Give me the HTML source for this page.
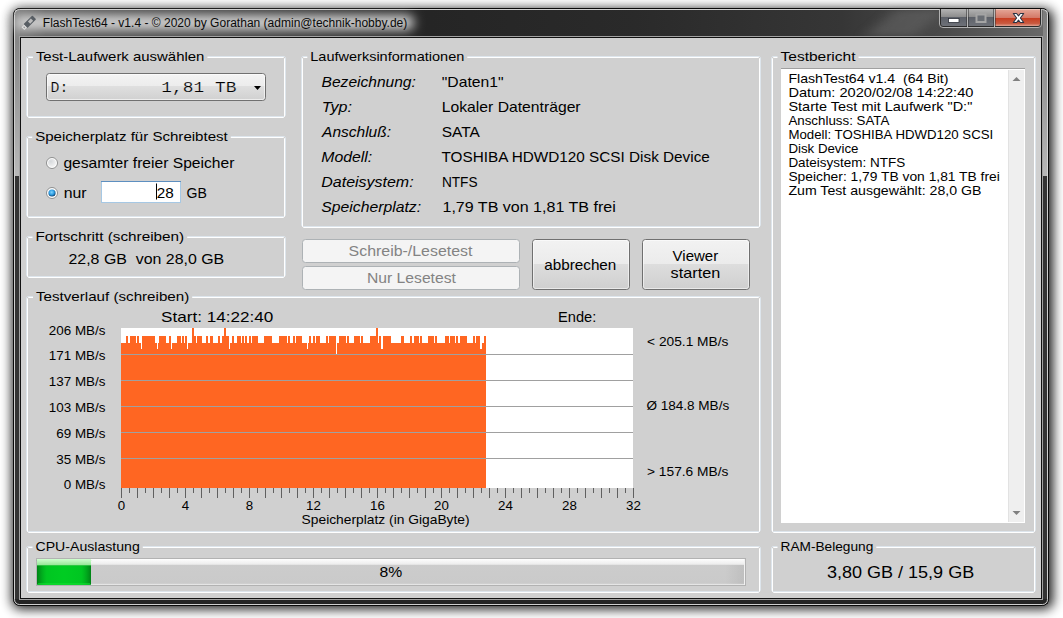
<!DOCTYPE html>
<html><head><meta charset="utf-8"><style>
html,body{margin:0;padding:0;background:#fff;width:1063px;height:618px;overflow:hidden}
svg{display:block}
</style></head><body>
<svg width="1063" height="618" viewBox="0 0 1063 618" shape-rendering="auto">
<defs>
<filter id="shadow" x="-5%" y="-8%" width="110%" height="120%"><feGaussianBlur stdDeviation="6"/></filter>
<filter id="glow" x="-20%" y="-100%" width="140%" height="300%"><feGaussianBlur stdDeviation="5.5"/></filter>
<linearGradient id="sideL" x1="0" y1="0" x2="0" y2="1"><stop offset="0" stop-color="#7c7c7c"/><stop offset="1" stop-color="#b8b8b8"/></linearGradient>
<linearGradient id="tbar" gradientUnits="userSpaceOnUse" x1="15" y1="0" x2="1048" y2="0"><stop offset="0" stop-color="#7a7a7a"/><stop offset="0.03" stop-color="#5a5a5a"/><stop offset="0.4" stop-color="#252525"/><stop offset="0.6" stop-color="#2a2a2a"/><stop offset="0.8" stop-color="#363636"/><stop offset="0.9" stop-color="#4a4a4a"/><stop offset="1" stop-color="#6a6a6a"/></linearGradient>
<linearGradient id="btnG" x1="0" y1="0" x2="0" y2="1"><stop offset="0" stop-color="#f2f2f2"/><stop offset="0.5" stop-color="#ebebeb"/><stop offset="0.5" stop-color="#dddddd"/><stop offset="1" stop-color="#cfcfcf"/></linearGradient>
<linearGradient id="cmbG" x1="0" y1="0" x2="0" y2="1"><stop offset="0" stop-color="#f4f4f4"/><stop offset="0.48" stop-color="#ececec"/><stop offset="0.48" stop-color="#dfdfdf"/><stop offset="1" stop-color="#d0d0d0"/></linearGradient>
<linearGradient id="minG" x1="0" y1="0" x2="0" y2="1"><stop offset="0" stop-color="#b9b9b9"/><stop offset="0.45" stop-color="#8c8c8c"/><stop offset="0.5" stop-color="#5d6068"/><stop offset="1" stop-color="#6a6d75"/></linearGradient>
<linearGradient id="clsG" x1="0" y1="0" x2="0" y2="1"><stop offset="0" stop-color="#e0a090"/><stop offset="0.45" stop-color="#cc6a55"/><stop offset="0.5" stop-color="#c0391d"/><stop offset="1" stop-color="#d0604a"/></linearGradient>
<linearGradient id="grnG" x1="0" y1="0" x2="0" y2="1"><stop offset="0" stop-color="#c8ffc8"/><stop offset="0.22" stop-color="#a8eaa8"/><stop offset="0.23" stop-color="#00c020"/><stop offset="1" stop-color="#00dd22"/></linearGradient>
<linearGradient id="prgG" x1="0" y1="0" x2="0" y2="1"><stop offset="0" stop-color="#ffffff"/><stop offset="0.22" stop-color="#ececec"/><stop offset="0.23" stop-color="#cccccc"/><stop offset="0.92" stop-color="#cacaca"/><stop offset="0.96" stop-color="#e8e8e8"/><stop offset="1" stop-color="#c8c8c8"/></linearGradient>
</defs>
<rect x="0" y="0" width="1063" height="618" fill="#ffffff"/>
<rect x="12" y="9" width="1041" height="600" rx="8" fill="#000" opacity="0.9" filter="url(#shadow)"/>
<rect x="13.5" y="8.5" width="1035" height="597" rx="6" fill="#343434" stroke="#0a0a0a" stroke-width="1"/><rect x="15" y="599" width="1033" height="5" fill="#242424"/>
<rect x="15" y="10" width="1033" height="26" fill="url(#tbar)"/>
<filter id="streak" x="-50%" y="-50%" width="200%" height="200%"><feGaussianBlur stdDeviation="7 3"/></filter>
<polygon points="895,10 945,10 915,36 865,36" fill="#666" opacity="0.55" filter="url(#streak)"/>
<rect x="15" y="10" width="5" height="166" fill="url(#sideL)"/>
<rect x="1043" y="10" width="5" height="166" fill="url(#sideL)"/>
<rect x="14" y="15" width="400" height="15" rx="7" fill="#d4d4d4" filter="url(#glow)"/>
<rect x="14.5" y="9.5" width="1033" height="595" rx="5" fill="none" stroke="#d8d8d8" stroke-opacity="0.95" stroke-width="1"/>
<rect x="19.5" y="36.5" width="1023" height="563" fill="none" stroke="#a2a2a2" stroke-width="1"/>
<rect x="20.5" y="37.5" width="1021" height="561" fill="none" stroke="#111" stroke-width="1"/>
<rect x="21" y="38" width="1020" height="560" fill="#d0d0d0"/>
<path d="M26.5,57.5 L27.5,56.5 L284.5,56.5 L285.5,57.5 L285.5,115.5 L284.5,116.5 L27.5,116.5 L26.5,115.5 Z" fill="none" stroke="#dde5ec" stroke-width="1"/>
<path d="M27.5,58.5 L28.5,57.5 L283.5,57.5 L284.5,58.5 L284.5,116.5 L283.5,117.5 L28.5,117.5 L27.5,116.5 Z" fill="none" stroke="#ffffff" stroke-width="1"/>
<path d="M26.5,137.5 L27.5,136.5 L284.5,136.5 L285.5,137.5 L285.5,215.5 L284.5,216.5 L27.5,216.5 L26.5,215.5 Z" fill="none" stroke="#dde5ec" stroke-width="1"/>
<path d="M27.5,138.5 L28.5,137.5 L283.5,137.5 L284.5,138.5 L284.5,216.5 L283.5,217.5 L28.5,217.5 L27.5,216.5 Z" fill="none" stroke="#ffffff" stroke-width="1"/>
<path d="M26.5,237.5 L27.5,236.5 L284.5,236.5 L285.5,237.5 L285.5,275.5 L284.5,276.5 L27.5,276.5 L26.5,275.5 Z" fill="none" stroke="#dde5ec" stroke-width="1"/>
<path d="M27.5,238.5 L28.5,237.5 L283.5,237.5 L284.5,238.5 L284.5,276.5 L283.5,277.5 L28.5,277.5 L27.5,276.5 Z" fill="none" stroke="#ffffff" stroke-width="1"/>
<path d="M26.5,297.5 L27.5,296.5 L759.5,296.5 L760.5,297.5 L760.5,530.5 L759.5,531.5 L27.5,531.5 L26.5,530.5 Z" fill="none" stroke="#dde5ec" stroke-width="1"/>
<path d="M27.5,298.5 L28.5,297.5 L758.5,297.5 L759.5,298.5 L759.5,531.5 L758.5,532.5 L28.5,532.5 L27.5,531.5 Z" fill="none" stroke="#ffffff" stroke-width="1"/>
<path d="M26.5,547.5 L27.5,546.5 L759.5,546.5 L760.5,547.5 L760.5,590.5 L759.5,591.5 L27.5,591.5 L26.5,590.5 Z" fill="none" stroke="#dde5ec" stroke-width="1"/>
<path d="M27.5,548.5 L28.5,547.5 L758.5,547.5 L759.5,548.5 L759.5,591.5 L758.5,592.5 L28.5,592.5 L27.5,591.5 Z" fill="none" stroke="#ffffff" stroke-width="1"/>
<path d="M301.5,57.5 L302.5,56.5 L759.5,56.5 L760.5,57.5 L760.5,225.5 L759.5,226.5 L302.5,226.5 L301.5,225.5 Z" fill="none" stroke="#dde5ec" stroke-width="1"/>
<path d="M302.5,58.5 L303.5,57.5 L758.5,57.5 L759.5,58.5 L759.5,226.5 L758.5,227.5 L303.5,227.5 L302.5,226.5 Z" fill="none" stroke="#ffffff" stroke-width="1"/>
<path d="M771.5,57.5 L772.5,56.5 L1034.5,56.5 L1035.5,57.5 L1035.5,530.5 L1034.5,531.5 L772.5,531.5 L771.5,530.5 Z" fill="none" stroke="#dde5ec" stroke-width="1"/>
<path d="M772.5,58.5 L773.5,57.5 L1033.5,57.5 L1034.5,58.5 L1034.5,531.5 L1033.5,532.5 L773.5,532.5 L772.5,531.5 Z" fill="none" stroke="#ffffff" stroke-width="1"/>
<path d="M771.5,547.5 L772.5,546.5 L1034.5,546.5 L1035.5,547.5 L1035.5,590.5 L1034.5,591.5 L772.5,591.5 L771.5,590.5 Z" fill="none" stroke="#dde5ec" stroke-width="1"/>
<path d="M772.5,548.5 L773.5,547.5 L1033.5,547.5 L1034.5,548.5 L1034.5,591.5 L1033.5,592.5 L773.5,592.5 L772.5,591.5 Z" fill="none" stroke="#ffffff" stroke-width="1"/>
<rect x="32.9" y="54" width="174.5" height="6" fill="#d0d0d0"/>
<rect x="307.3" y="54" width="160.0" height="6" fill="#d0d0d0"/>
<rect x="777.5" y="54" width="81.0" height="6" fill="#d0d0d0"/>
<rect x="32.2" y="134" width="198.60000000000002" height="6" fill="#d0d0d0"/>
<rect x="32.5" y="234" width="154.7" height="6" fill="#d0d0d0"/>
<rect x="33" y="294" width="159.2" height="6" fill="#d0d0d0"/>
<rect x="32.5" y="544" width="110.30000000000001" height="6" fill="#d0d0d0"/>
<rect x="777.5" y="544" width="98.79999999999995" height="6" fill="#d0d0d0"/>
<text x="35.90" y="61.00" font-size="13" font-family='"Liberation Sans",sans-serif' fill="#000" textLength="168.50" lengthAdjust="spacingAndGlyphs" style="white-space:pre">Test-Laufwerk auswählen</text>
<text x="310.30" y="61.00" font-size="13" font-family='"Liberation Sans",sans-serif' fill="#000" textLength="154.00" lengthAdjust="spacingAndGlyphs" style="white-space:pre">Laufwerksinformationen</text>
<text x="780.50" y="61.00" font-size="13" font-family='"Liberation Sans",sans-serif' fill="#000" textLength="75.01" lengthAdjust="spacingAndGlyphs" style="white-space:pre">Testbericht</text>
<text x="35.20" y="141.00" font-size="13" font-family='"Liberation Sans",sans-serif' fill="#000" textLength="192.60" lengthAdjust="spacingAndGlyphs" style="white-space:pre">Speicherplatz für Schreibtest</text>
<text x="35.50" y="241.00" font-size="13" font-family='"Liberation Sans",sans-serif' fill="#000" textLength="148.69" lengthAdjust="spacingAndGlyphs" style="white-space:pre">Fortschritt (schreiben)</text>
<text x="36.00" y="301.00" font-size="13" font-family='"Liberation Sans",sans-serif' fill="#000" textLength="153.20" lengthAdjust="spacingAndGlyphs" style="white-space:pre">Testverlauf (schreiben)</text>
<text x="35.50" y="551.00" font-size="13" font-family='"Liberation Sans",sans-serif' fill="#000" textLength="104.30" lengthAdjust="spacingAndGlyphs" style="white-space:pre">CPU-Auslastung</text>
<text x="780.50" y="551.00" font-size="13" font-family='"Liberation Sans",sans-serif' fill="#000" textLength="92.80" lengthAdjust="spacingAndGlyphs" style="white-space:pre">RAM-Belegung</text>
<text x="42.80" y="27.00" font-size="12" font-family='"Liberation Sans",sans-serif' fill="#0a0a0a" textLength="364.50" lengthAdjust="spacingAndGlyphs" style="white-space:pre">FlashTest64 - v1.4 - © 2020 by Gorathan (admin@technik-hobby.de)</text>
<rect x="46.5" y="73.5" width="219" height="27" rx="3" fill="url(#cmbG)" stroke="#707070"/>
<rect x="47.5" y="74.5" width="217" height="25" rx="2" fill="none" stroke="#fff" stroke-opacity="0.6"/>
<text x="50.50" y="92.00" font-size="15.5" font-family='"Liberation Mono",monospace' fill="#000" textLength="17.80" lengthAdjust="spacingAndGlyphs" style="white-space:pre" stroke="#e6e6e6" stroke-width="0.2">D:</text>
<text x="161.30" y="92.00" font-size="15.5" font-family='"Liberation Mono",monospace' fill="#000" textLength="75.09" lengthAdjust="spacingAndGlyphs" style="white-space:pre" stroke="#e6e6e6" stroke-width="0.2">1,81 TB</text>
<path d="M254,86 L261,86 L257.5,90 Z" fill="#000"/>
<radialGradient id="rdG" cx="0.35" cy="0.3" r="0.8"><stop offset="0" stop-color="#d6d9dc"/><stop offset="1" stop-color="#f6f6f6"/></radialGradient>
<radialGradient id="rdB" cx="0.45" cy="0.4" r="0.6"><stop offset="0" stop-color="#7fd4ff"/><stop offset="0.6" stop-color="#2a9ae0"/><stop offset="1" stop-color="#0b3a66"/></radialGradient>
<circle cx="52" cy="163" r="5.5" fill="#fff" stroke="#8e8f8f"/>
<circle cx="52" cy="163" r="4" fill="url(#rdG)"/>
<circle cx="52" cy="193" r="5.5" fill="#fff" stroke="#8e8f8f"/>
<circle cx="52" cy="193" r="3.6" fill="url(#rdB)"/>
<text x="63.40" y="168.00" font-size="14.5" font-family='"Liberation Sans",sans-serif' fill="#000" textLength="171.00" lengthAdjust="spacingAndGlyphs" style="white-space:pre">gesamter freier Speicher</text>
<text x="63.70" y="197.50" font-size="14.5" font-family='"Liberation Sans",sans-serif' fill="#000" textLength="22.91" lengthAdjust="spacingAndGlyphs" style="white-space:pre">nur</text>
<rect x="101.5" y="181.5" width="79" height="21" fill="#fff" stroke="#a6c8e4"/>
<line x1="101" y1="181.5" x2="181" y2="181.5" stroke="#5d8fc0"/>
<text x="156.80" y="197.50" font-size="14.5" font-family='"Liberation Sans",sans-serif' fill="#000" textLength="17.00" lengthAdjust="spacingAndGlyphs" style="white-space:pre">28</text>
<rect x="156" y="183.5" width="1" height="16" fill="#000"/>
<text x="186.50" y="197.50" font-size="14.5" font-family='"Liberation Sans",sans-serif' fill="#000" textLength="20.30" lengthAdjust="spacingAndGlyphs" style="white-space:pre">GB</text>
<text x="321.60" y="87.00" font-size="14.5" font-family='"Liberation Sans",sans-serif' font-style="italic" fill="#000" textLength="94.20" lengthAdjust="spacingAndGlyphs" style="white-space:pre">Bezeichnung:</text>
<text x="441.80" y="87.00" font-size="14.5" font-family='"Liberation Sans",sans-serif' fill="#000" textLength="61.79" lengthAdjust="spacingAndGlyphs" style="white-space:pre">&quot;Daten1&quot;</text>
<text x="321.80" y="112.00" font-size="14.5" font-family='"Liberation Sans",sans-serif' font-style="italic" fill="#000" textLength="30.09" lengthAdjust="spacingAndGlyphs" style="white-space:pre">Typ:</text>
<text x="441.80" y="112.00" font-size="14.5" font-family='"Liberation Sans",sans-serif' fill="#000" textLength="138.81" lengthAdjust="spacingAndGlyphs" style="white-space:pre">Lokaler Datenträger</text>
<text x="322.08" y="137.00" font-size="14.5" font-family='"Liberation Sans",sans-serif' font-style="italic" fill="#000" textLength="68.93" lengthAdjust="spacingAndGlyphs" style="white-space:pre">Anschluß:</text>
<text x="441.80" y="137.00" font-size="14.5" font-family='"Liberation Sans",sans-serif' fill="#000" textLength="38.11" lengthAdjust="spacingAndGlyphs" style="white-space:pre">SATA</text>
<text x="321.30" y="162.00" font-size="14.5" font-family='"Liberation Sans",sans-serif' font-style="italic" fill="#000" textLength="50.89" lengthAdjust="spacingAndGlyphs" style="white-space:pre">Modell:</text>
<text x="441.50" y="162.00" font-size="14.5" font-family='"Liberation Sans",sans-serif' fill="#000" textLength="268.29" lengthAdjust="spacingAndGlyphs" style="white-space:pre">TOSHIBA HDWD120 SCSI Disk Device</text>
<text x="321.30" y="187.00" font-size="14.5" font-family='"Liberation Sans",sans-serif' font-style="italic" fill="#000" textLength="92.30" lengthAdjust="spacingAndGlyphs" style="white-space:pre">Dateisystem:</text>
<text x="441.90" y="187.00" font-size="14.5" font-family='"Liberation Sans",sans-serif' fill="#000" textLength="35.60" lengthAdjust="spacingAndGlyphs" style="white-space:pre">NTFS</text>
<text x="321.30" y="212.00" font-size="14.5" font-family='"Liberation Sans",sans-serif' font-style="italic" fill="#000" textLength="99.80" lengthAdjust="spacingAndGlyphs" style="white-space:pre">Speicherplatz:</text>
<text x="442.50" y="212.00" font-size="14.5" font-family='"Liberation Sans",sans-serif' fill="#000" textLength="173.20" lengthAdjust="spacingAndGlyphs" style="white-space:pre">1,79 TB von 1,81 TB frei</text>
<text x="68.50" y="264.00" font-size="14.5" font-family='"Liberation Sans",sans-serif' fill="#000" textLength="155.70" lengthAdjust="spacingAndGlyphs" style="white-space:pre">22,8 GB  von 28,0 GB</text>
<rect x="302.5" y="239.5" width="217" height="23" rx="3" fill="#f4f4f4" stroke="#adb2b5"/>
<rect x="302.5" y="266.5" width="217" height="23" rx="3" fill="#f4f4f4" stroke="#adb2b5"/>
<rect x="532.5" y="239.5" width="97" height="50" rx="3" fill="url(#btnG)" stroke="#707070"/>
<rect x="533.5" y="240.5" width="95" height="48" rx="2" fill="none" stroke="#fff" stroke-opacity="0.55"/>
<rect x="642.5" y="239.5" width="107" height="50" rx="3" fill="url(#btnG)" stroke="#707070"/>
<rect x="643.5" y="240.5" width="105" height="48" rx="2" fill="none" stroke="#fff" stroke-opacity="0.55"/>
<text x="348.60" y="256.00" font-size="14.5" font-family='"Liberation Sans",sans-serif' fill="#838383" textLength="123.80" lengthAdjust="spacingAndGlyphs" style="white-space:pre">Schreib-/Lesetest</text>
<text x="367.00" y="283.00" font-size="14.5" font-family='"Liberation Sans",sans-serif' fill="#838383" textLength="88.91" lengthAdjust="spacingAndGlyphs" style="white-space:pre">Nur Lesetest</text>
<text x="544.30" y="270.00" font-size="14.5" font-family='"Liberation Sans",sans-serif' fill="#000" textLength="72.00" lengthAdjust="spacingAndGlyphs" style="white-space:pre">abbrechen</text>
<text x="672.60" y="261.00" font-size="14.5" font-family='"Liberation Sans",sans-serif' fill="#000" textLength="45.59" lengthAdjust="spacingAndGlyphs" style="white-space:pre">Viewer</text>
<text x="670.60" y="277.50" font-size="14.5" font-family='"Liberation Sans",sans-serif' fill="#000" textLength="49.60" lengthAdjust="spacingAndGlyphs" style="white-space:pre">starten</text>
<rect x="121" y="328" width="512" height="160" fill="#fff"/>
<path d="M121,488 L121,343 L126,343 L126,336 L128,336 L128,343 L130,343 L130,336 L136,336 L136,343 L137,343 L137,336 L139,336 L139,343 L141,343 L141,349 L142,349 L142,336 L155,336 L155,343 L157,343 L157,349 L158,349 L158,343 L159,343 L159,336 L166,336 L166,343 L169,343 L169,336 L171,336 L171,349 L172,349 L172,343 L177,343 L177,336 L181,336 L181,343 L182,343 L182,336 L184,336 L184,343 L185,343 L185,336 L187,336 L187,349 L188,349 L188,343 L192,343 L192,328 L194,328 L194,336 L196,336 L196,343 L197,343 L197,336 L202,336 L202,343 L206,343 L206,336 L208,336 L208,343 L210,343 L210,336 L213,336 L213,343 L218,343 L218,336 L220,336 L220,343 L222,343 L222,336 L224,336 L224,328 L226,328 L226,336 L229,336 L229,349 L230,349 L230,343 L232,343 L232,336 L234,336 L234,343 L237,343 L237,336 L241,336 L241,343 L242,343 L242,336 L244,336 L244,343 L245,343 L245,336 L247,336 L247,343 L249,343 L249,336 L251,336 L251,343 L252,343 L252,336 L258,336 L258,343 L264,343 L264,336 L272,336 L272,343 L279,343 L279,336 L287,336 L287,343 L288,343 L288,336 L290,336 L290,343 L293,343 L293,336 L295,336 L295,343 L296,343 L296,336 L302,336 L302,343 L307,343 L307,349 L308,349 L308,343 L309,343 L309,336 L311,336 L311,343 L313,343 L313,336 L315,336 L315,343 L316,343 L316,336 L320,336 L320,343 L326,343 L326,336 L328,336 L328,343 L329,343 L329,336 L336,336 L336,354 L337,354 L337,343 L339,343 L339,336 L346,336 L346,343 L347,343 L347,336 L349,336 L349,343 L354,343 L354,336 L360,336 L360,343 L361,343 L361,336 L363,336 L363,343 L370,343 L370,336 L376,336 L376,328 L378,328 L378,343 L379,343 L379,336 L381,336 L381,349 L383,349 L383,336 L391,336 L391,343 L401,343 L401,336 L404,336 L404,343 L410,343 L410,336 L412,336 L412,343 L414,343 L414,336 L419,336 L419,343 L420,343 L420,336 L422,336 L422,343 L428,343 L428,336 L434,336 L434,343 L435,343 L435,336 L437,336 L437,343 L445,343 L445,336 L449,336 L449,343 L450,343 L450,336 L455,336 L455,343 L456,343 L456,336 L458,336 L458,343 L460,343 L460,336 L467,336 L467,343 L473,343 L473,336 L475,336 L475,343 L476,343 L476,336 L480,336 L480,349 L482,349 L482,343 L484,343 L484,336 L486,336 L486,488 Z" fill="#ff6622"/>
<rect x="121" y="354" width="512" height="1" fill="#a0a0a0"/>
<rect x="121" y="380" width="512" height="1" fill="#a0a0a0"/>
<rect x="121" y="406" width="512" height="1" fill="#a0a0a0"/>
<rect x="121" y="432" width="512" height="1" fill="#a0a0a0"/>
<rect x="121" y="458" width="512" height="1" fill="#a0a0a0"/>
<rect x="121" y="488" width="1" height="10" fill="#606060"/>
<rect x="129" y="488" width="1" height="5" fill="#606060"/>
<rect x="137" y="488" width="1" height="10" fill="#606060"/>
<rect x="145" y="488" width="1" height="5" fill="#606060"/>
<rect x="153" y="488" width="1" height="10" fill="#606060"/>
<rect x="161" y="488" width="1" height="5" fill="#606060"/>
<rect x="169" y="488" width="1" height="10" fill="#606060"/>
<rect x="177" y="488" width="1" height="5" fill="#606060"/>
<rect x="185" y="488" width="1" height="10" fill="#606060"/>
<rect x="193" y="488" width="1" height="5" fill="#606060"/>
<rect x="201" y="488" width="1" height="10" fill="#606060"/>
<rect x="209" y="488" width="1" height="5" fill="#606060"/>
<rect x="217" y="488" width="1" height="10" fill="#606060"/>
<rect x="225" y="488" width="1" height="5" fill="#606060"/>
<rect x="233" y="488" width="1" height="10" fill="#606060"/>
<rect x="241" y="488" width="1" height="5" fill="#606060"/>
<rect x="249" y="488" width="1" height="10" fill="#606060"/>
<rect x="257" y="488" width="1" height="5" fill="#606060"/>
<rect x="265" y="488" width="1" height="10" fill="#606060"/>
<rect x="273" y="488" width="1" height="5" fill="#606060"/>
<rect x="281" y="488" width="1" height="10" fill="#606060"/>
<rect x="289" y="488" width="1" height="5" fill="#606060"/>
<rect x="297" y="488" width="1" height="10" fill="#606060"/>
<rect x="305" y="488" width="1" height="5" fill="#606060"/>
<rect x="313" y="488" width="1" height="10" fill="#606060"/>
<rect x="321" y="488" width="1" height="5" fill="#606060"/>
<rect x="329" y="488" width="1" height="10" fill="#606060"/>
<rect x="337" y="488" width="1" height="5" fill="#606060"/>
<rect x="345" y="488" width="1" height="10" fill="#606060"/>
<rect x="353" y="488" width="1" height="5" fill="#606060"/>
<rect x="361" y="488" width="1" height="10" fill="#606060"/>
<rect x="369" y="488" width="1" height="5" fill="#606060"/>
<rect x="377" y="488" width="1" height="10" fill="#606060"/>
<rect x="385" y="488" width="1" height="5" fill="#606060"/>
<rect x="393" y="488" width="1" height="10" fill="#606060"/>
<rect x="401" y="488" width="1" height="5" fill="#606060"/>
<rect x="409" y="488" width="1" height="10" fill="#606060"/>
<rect x="417" y="488" width="1" height="5" fill="#606060"/>
<rect x="425" y="488" width="1" height="10" fill="#606060"/>
<rect x="433" y="488" width="1" height="5" fill="#606060"/>
<rect x="441" y="488" width="1" height="10" fill="#606060"/>
<rect x="449" y="488" width="1" height="5" fill="#606060"/>
<rect x="457" y="488" width="1" height="10" fill="#606060"/>
<rect x="465" y="488" width="1" height="5" fill="#606060"/>
<rect x="473" y="488" width="1" height="10" fill="#606060"/>
<rect x="481" y="488" width="1" height="5" fill="#606060"/>
<rect x="489" y="488" width="1" height="10" fill="#606060"/>
<rect x="497" y="488" width="1" height="5" fill="#606060"/>
<rect x="505" y="488" width="1" height="10" fill="#606060"/>
<rect x="513" y="488" width="1" height="5" fill="#606060"/>
<rect x="521" y="488" width="1" height="10" fill="#606060"/>
<rect x="529" y="488" width="1" height="5" fill="#606060"/>
<rect x="537" y="488" width="1" height="10" fill="#606060"/>
<rect x="545" y="488" width="1" height="5" fill="#606060"/>
<rect x="553" y="488" width="1" height="10" fill="#606060"/>
<rect x="561" y="488" width="1" height="5" fill="#606060"/>
<rect x="569" y="488" width="1" height="10" fill="#606060"/>
<rect x="577" y="488" width="1" height="5" fill="#606060"/>
<rect x="585" y="488" width="1" height="10" fill="#606060"/>
<rect x="593" y="488" width="1" height="5" fill="#606060"/>
<rect x="601" y="488" width="1" height="10" fill="#606060"/>
<rect x="609" y="488" width="1" height="5" fill="#606060"/>
<rect x="617" y="488" width="1" height="10" fill="#606060"/>
<rect x="625" y="488" width="1" height="5" fill="#606060"/>
<rect x="633" y="488" width="1" height="10" fill="#606060"/>
<text x="161.10" y="322.00" font-size="14.5" font-family='"Liberation Sans",sans-serif' fill="#000" textLength="112.20" lengthAdjust="spacingAndGlyphs" style="white-space:pre">Start: 14:22:40</text>
<text x="558.10" y="322.00" font-size="14.5" font-family='"Liberation Sans",sans-serif' fill="#000" textLength="38.20" lengthAdjust="spacingAndGlyphs" style="white-space:pre">Ende:</text>
<text x="48.80" y="334.50" font-size="13.5" font-family='"Liberation Sans",sans-serif' fill="#000" textLength="56.70" lengthAdjust="spacingAndGlyphs" style="white-space:pre">206 MB/s</text>
<text x="48.80" y="360.30" font-size="13.5" font-family='"Liberation Sans",sans-serif' fill="#000" textLength="56.70" lengthAdjust="spacingAndGlyphs" style="white-space:pre">171 MB/s</text>
<text x="48.80" y="386.10" font-size="13.5" font-family='"Liberation Sans",sans-serif' fill="#000" textLength="56.70" lengthAdjust="spacingAndGlyphs" style="white-space:pre">137 MB/s</text>
<text x="48.80" y="411.90" font-size="13.5" font-family='"Liberation Sans",sans-serif' fill="#000" textLength="56.70" lengthAdjust="spacingAndGlyphs" style="white-space:pre">103 MB/s</text>
<text x="56.26" y="437.70" font-size="13.5" font-family='"Liberation Sans",sans-serif' fill="#000" textLength="49.24" lengthAdjust="spacingAndGlyphs" style="white-space:pre">69 MB/s</text>
<text x="56.26" y="463.50" font-size="13.5" font-family='"Liberation Sans",sans-serif' fill="#000" textLength="49.24" lengthAdjust="spacingAndGlyphs" style="white-space:pre">35 MB/s</text>
<text x="63.73" y="489.30" font-size="13.5" font-family='"Liberation Sans",sans-serif' fill="#000" textLength="41.77" lengthAdjust="spacingAndGlyphs" style="white-space:pre">0 MB/s</text>
<text x="647.10" y="346.00" font-size="13" font-family='"Liberation Sans",sans-serif' fill="#000" textLength="81.30" lengthAdjust="spacingAndGlyphs" style="white-space:pre">&lt; 205.1 MB/s</text>
<text x="646.40" y="410.00" font-size="13" font-family='"Liberation Sans",sans-serif' fill="#000" textLength="82.80" lengthAdjust="spacingAndGlyphs" style="white-space:pre">Ø 184.8 MB/s</text>
<text x="647.00" y="476.00" font-size="13" font-family='"Liberation Sans",sans-serif' fill="#000" textLength="81.40" lengthAdjust="spacingAndGlyphs" style="white-space:pre">&gt; 157.6 MB/s</text>
<text x="117.80" y="510.00" font-size="13" font-family='"Liberation Sans",sans-serif' fill="#000" textLength="7.40" lengthAdjust="spacingAndGlyphs" style="white-space:pre">0</text>
<text x="181.80" y="510.00" font-size="13" font-family='"Liberation Sans",sans-serif' fill="#000" textLength="7.40" lengthAdjust="spacingAndGlyphs" style="white-space:pre">4</text>
<text x="245.80" y="510.00" font-size="13" font-family='"Liberation Sans",sans-serif' fill="#000" textLength="7.40" lengthAdjust="spacingAndGlyphs" style="white-space:pre">8</text>
<text x="306.10" y="510.00" font-size="13" font-family='"Liberation Sans",sans-serif' fill="#000" textLength="14.80" lengthAdjust="spacingAndGlyphs" style="white-space:pre">12</text>
<text x="370.10" y="510.00" font-size="13" font-family='"Liberation Sans",sans-serif' fill="#000" textLength="14.80" lengthAdjust="spacingAndGlyphs" style="white-space:pre">16</text>
<text x="434.10" y="510.00" font-size="13" font-family='"Liberation Sans",sans-serif' fill="#000" textLength="14.80" lengthAdjust="spacingAndGlyphs" style="white-space:pre">20</text>
<text x="498.10" y="510.00" font-size="13" font-family='"Liberation Sans",sans-serif' fill="#000" textLength="14.80" lengthAdjust="spacingAndGlyphs" style="white-space:pre">24</text>
<text x="562.10" y="510.00" font-size="13" font-family='"Liberation Sans",sans-serif' fill="#000" textLength="14.80" lengthAdjust="spacingAndGlyphs" style="white-space:pre">28</text>
<text x="626.10" y="510.00" font-size="13" font-family='"Liberation Sans",sans-serif' fill="#000" textLength="14.80" lengthAdjust="spacingAndGlyphs" style="white-space:pre">32</text>
<text x="301.60" y="524.00" font-size="13" font-family='"Liberation Sans",sans-serif' fill="#000" textLength="168.01" lengthAdjust="spacingAndGlyphs" style="white-space:pre">Speicherplatz (in GigaByte)</text>
<rect x="781" y="68" width="244" height="455" fill="#fff"/>
<rect x="781" y="68" width="244" height="1" fill="#a0a0a0"/>
<rect x="1008" y="70" width="16" height="452" fill="#efefef"/>
<rect x="1008" y="70" width="1" height="452" fill="#e2e2e2"/>
<path d="M1012.5,81 L1016.5,77 L1020.5,81 Z" fill="#808080"/>
<path d="M1012.5,511 L1016.5,515 L1020.5,511 Z" fill="#808080"/>
<text x="788.40" y="83.00" font-size="13" font-family='"Liberation Sans",sans-serif' fill="#000" textLength="160.11" lengthAdjust="spacingAndGlyphs" style="white-space:pre">FlashTest64 v1.4  (64 Bit)</text>
<text x="788.40" y="97.00" font-size="13" font-family='"Liberation Sans",sans-serif' fill="#000" textLength="185.00" lengthAdjust="spacingAndGlyphs" style="white-space:pre">Datum: 2020/02/08 14:22:40</text>
<text x="788.40" y="111.00" font-size="13" font-family='"Liberation Sans",sans-serif' fill="#000" textLength="183.90" lengthAdjust="spacingAndGlyphs" style="white-space:pre">Starte Test mit Laufwerk &quot;D:&quot;</text>
<text x="788.40" y="125.00" font-size="13" font-family='"Liberation Sans",sans-serif' fill="#000" textLength="101.00" lengthAdjust="spacingAndGlyphs" style="white-space:pre">Anschluss: SATA</text>
<text x="788.40" y="139.00" font-size="13" font-family='"Liberation Sans",sans-serif' fill="#000" textLength="204.90" lengthAdjust="spacingAndGlyphs" style="white-space:pre">Modell: TOSHIBA HDWD120 SCSI</text>
<text x="788.40" y="153.00" font-size="13" font-family='"Liberation Sans",sans-serif' fill="#000" textLength="70.10" lengthAdjust="spacingAndGlyphs" style="white-space:pre">Disk Device</text>
<text x="788.40" y="167.00" font-size="13" font-family='"Liberation Sans",sans-serif' fill="#000" textLength="116.80" lengthAdjust="spacingAndGlyphs" style="white-space:pre">Dateisystem: NTFS</text>
<text x="788.40" y="181.00" font-size="13" font-family='"Liberation Sans",sans-serif' fill="#000" textLength="211.40" lengthAdjust="spacingAndGlyphs" style="white-space:pre">Speicher: 1,79 TB von 1,81 TB frei</text>
<text x="788.40" y="195.00" font-size="13" font-family='"Liberation Sans",sans-serif' fill="#000" textLength="193.00" lengthAdjust="spacingAndGlyphs" style="white-space:pre">Zum Test ausgewählt: 28,0 GB</text>
<rect x="36.5" y="558.5" width="709" height="27" fill="url(#prgG)" stroke="#b2b2b2"/>
<linearGradient id="prR" x1="0" y1="0" x2="1" y2="0"><stop offset="0" stop-color="#000" stop-opacity="0"/><stop offset="1" stop-color="#000" stop-opacity="0.06"/></linearGradient>
<rect x="725" y="565" width="19" height="19" fill="url(#prR)"/>
<rect x="744" y="559" width="1" height="26" fill="#f2f2f2"/>
<rect x="37" y="559" width="54" height="26" rx="1.5" fill="#00cc22"/>
<linearGradient id="gH" x1="0" y1="0" x2="1" y2="0"><stop offset="0" stop-color="#007a14" stop-opacity="0.9"/><stop offset="0.18" stop-color="#00a01c" stop-opacity="0.15"/><stop offset="0.5" stop-color="#00b01e" stop-opacity="0"/><stop offset="0.82" stop-color="#00a01c" stop-opacity="0.15"/><stop offset="1" stop-color="#007a14" stop-opacity="0.9"/></linearGradient>
<rect x="37" y="559" width="54" height="26" rx="1.5" fill="url(#gH)"/>
<linearGradient id="gT" x1="0" y1="0" x2="0" y2="1"><stop offset="0" stop-color="#d0ffd0"/><stop offset="1" stop-color="#98e698"/></linearGradient>
<rect x="37" y="559" width="54" height="6" fill="url(#gT)"/>
<rect x="37" y="565" width="54" height="1" fill="#40c850" opacity="0.7"/>
<rect x="38" y="583" width="52" height="2" fill="#10e030" opacity="0.6"/>
<text x="379.50" y="577.00" font-size="14.5" font-family='"Liberation Sans",sans-serif' fill="#000" textLength="22.70" lengthAdjust="spacingAndGlyphs" style="white-space:pre">8%</text>
<text x="826.90" y="577.50" font-size="16" font-family='"Liberation Sans",sans-serif' fill="#000" textLength="147.31" lengthAdjust="spacingAndGlyphs" style="white-space:pre">3,80 GB / 15,9 GB</text>
<linearGradient id="minG2" x1="0" y1="0" x2="0" y2="1"><stop offset="0" stop-color="#b4b4b4"/><stop offset="0.45" stop-color="#8e8e8e"/><stop offset="0.46" stop-color="#5c6068"/><stop offset="1" stop-color="#6e7178"/></linearGradient>
<linearGradient id="clsG2" x1="0" y1="0" x2="0" y2="1"><stop offset="0" stop-color="#f2d6cc"/><stop offset="0.08" stop-color="#e2a090"/><stop offset="0.5" stop-color="#d47a68"/><stop offset="0.52" stop-color="#c73c1f"/><stop offset="0.85" stop-color="#c95a40"/><stop offset="1" stop-color="#e0a090"/></linearGradient>
<path d="M939.5,9 L939.5,24 Q939.5,27.5 943,27.5 L1038,27.5 Q1041.5,27.5 1041.5,24 L1041.5,9" fill="#2a2a2a" stroke="#d8d8d8" stroke-opacity="0.75"/>
<path d="M941,9 L941,24 Q941,26 943,26 L966.5,26 L966.5,9 Z" fill="url(#minG2)"/>
<path d="M968.5,9 L993.5,9 L993.5,26 L968.5,26 Z" fill="url(#minG2)"/>
<path d="M995.5,9 L1040,9 L1040,24 Q1040,26 1038,26 L995.5,26 Z" fill="url(#clsG2)"/>
<rect x="967" y="9" width="1" height="18" fill="#dcdcdc" opacity="0.8"/>
<rect x="994" y="9" width="1" height="18" fill="#dcdcdc" opacity="0.8"/>
<rect x="948.5" y="18.5" width="10.5" height="4" fill="#fff" stroke="#2c3038" stroke-width="0.8"/>
<rect x="976.5" y="14.5" width="9" height="7.5" fill="#6a6e74" stroke="#a4a4a4" stroke-width="2"/>
<polygon points="1013.3,13.5 1016.6,13.5 1018.5,15.9 1020.4,13.5 1023.7,13.5 1020.4,18 1023.7,22.5 1020.4,22.5 1018.5,20.1 1016.6,22.5 1013.3,22.5 1016.6,18" fill="#fff" stroke="#2c3444" stroke-width="1.1" stroke-linejoin="round"/>
<g transform="translate(29.9,21.7) rotate(-45)"><rect x="-6.2" y="-2.7" width="12.4" height="5.4" rx="0.8" fill="#585e64"/><rect x="-1.2" y="-1.6" width="4.2" height="3.2" fill="#bcbcbc"/><rect x="-9.8" y="-2" width="3.6" height="4" fill="#dedede"/><rect x="-8.6" y="-0.9" width="1.2" height="1.8" fill="#9a9a9a"/></g>
</svg>
</body></html>
